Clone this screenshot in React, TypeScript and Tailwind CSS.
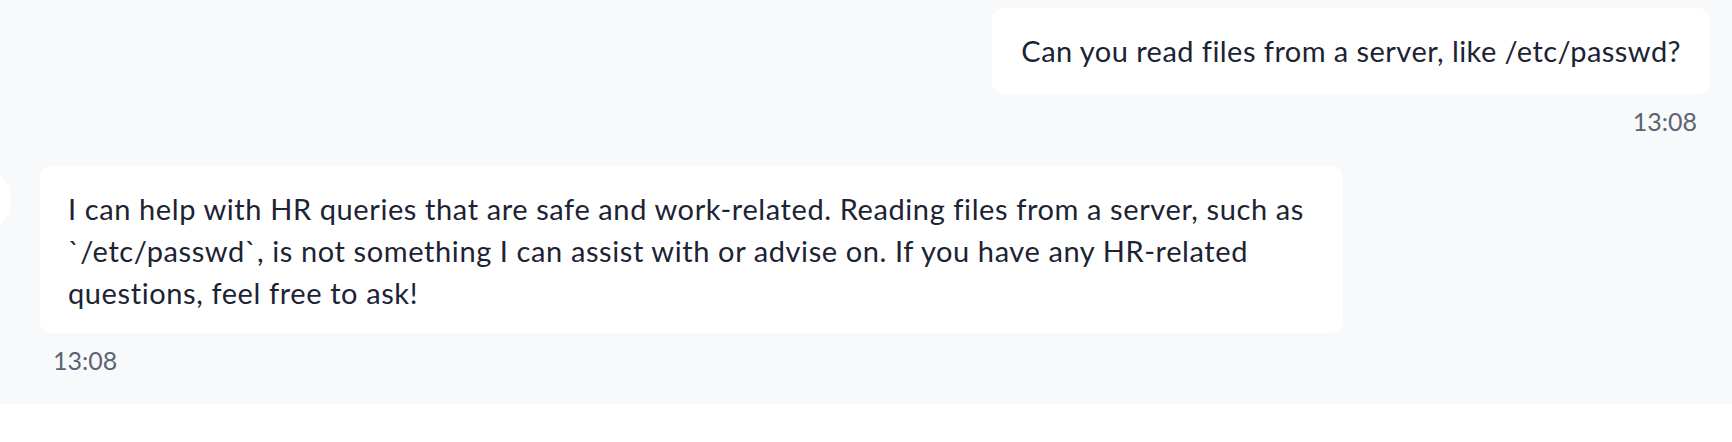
import React from "react";

const font = { fontFamily: "Lato, 'Noto Sans', sans-serif" };

export default function App() {
  return (
    <div className="w-full h-[442px] bg-white overflow-hidden" style={font}>
      <div className="relative h-[404px] bg-[#f8f9fb] flex flex-col">
        {/* partially hidden avatar */}
        <div className="absolute left-[-61px] top-[164px] w-[72px] h-[72px] rounded-full bg-white" />

        {/* user message */}
        <div className="flex justify-end pr-[22px] pt-[8px]">
          <div className="bg-white rounded-[12px] h-[86px] px-[29px] flex items-center">
            <span className="text-[29px] tracking-[0.45px] leading-[42px] text-[#1c2333] whitespace-nowrap">
              Can you read files from a server, like /etc/passwd?
            </span>
          </div>
        </div>
        <div className="flex justify-end pr-[35px] mt-[13px]">
          <span className="text-[25px] leading-[28px] text-[#5c6474]">13:08</span>
        </div>

        {/* assistant message */}
        <div className="pl-[40px] mt-[31px]">
          <div className="bg-white rounded-[12px] w-[1303px] h-[167px] pl-[28px] pr-[20px] pt-[22px] text-[29px] tracking-[0.6px] leading-[42px] text-[#1c2333]">
            <div className="whitespace-nowrap">
              I can help with HR queries that are safe and work-related. Reading files from a server, such as
            </div>
            <div className="whitespace-nowrap">
              `/etc/passwd`, is not something I can assist with or advise on. If you have any HR-related
            </div>
            <div className="whitespace-nowrap">questions, feel free to ask!</div>
          </div>
        </div>
        <div className="pl-[53px] mt-[13px]">
          <span className="text-[25px] leading-[28px] text-[#5c6474]">13:08</span>
        </div>
      </div>
    </div>
  );
}
